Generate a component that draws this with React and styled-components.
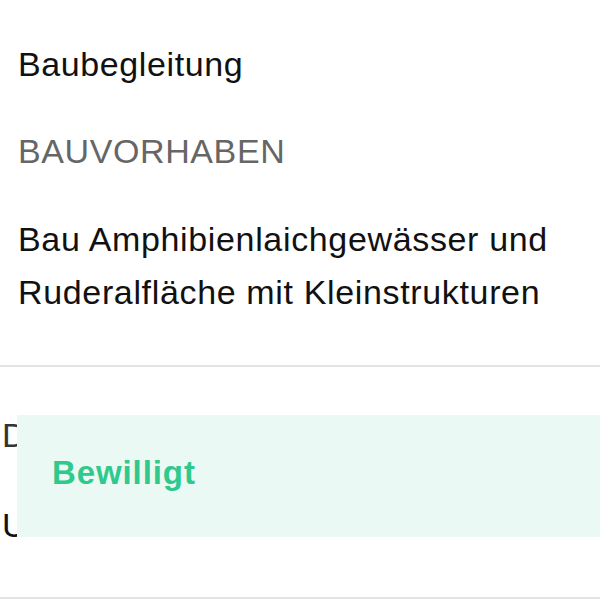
import React from 'react';
import styled, { createGlobalStyle } from 'styled-components';

const GlobalStyle = createGlobalStyle`
  html, body {
    margin: 0;
    padding: 0;
    background: #fff;
  }
  body {
    font-family: "Liberation Sans", Arial, sans-serif;
  }
`

const Page = styled.div`
  width: 600px;
  padding-top: 44px;
`

const Section = styled.div`
  display: flex;
  flex-direction: column;
  padding-left: 18px;
  padding-bottom: 46px;
`

const Title = styled.div`
  font-size: 34px;
  line-height: 40px;
  letter-spacing: 0.6px;
  color: #111;
`

const Label = styled.div`
  font-size: 34px;
  line-height: 40px;
  letter-spacing: 0.6px;
  color: ${p => p.$dark ? '#333' : '#666'};
  margin-top: ${p => p.$top || 0}px;
`

const Value = styled.div`
  font-size: 34px;
  line-height: ${p => p.$lh || 53}px;
  letter-spacing: 0.65px;
  color: #111;
  margin-top: ${p => p.$top || 0}px;
`

const Divider = styled.hr`
  margin: 0;
  border: none;
  height: 2px;
  background: #e4e4e4;
`

const StatusSection = styled.div`
  position: relative;
  display: flex;
  flex-direction: column;
  padding-top: 48px;
  padding-bottom: 52px;
  padding-left: 2px;
  overflow: hidden;
`

const Toast = styled.div`
  position: absolute;
  top: 48px;
  left: 17px;
  right: 0;
  height: 122px;
  box-sizing: border-box;
  display: flex;
  align-items: center;
  padding-left: 35px;
  padding-bottom: 6px;
  background: #ebf9f4;
`

const ToastText = styled.span`
  font-size: 33px;
  font-weight: 700;
  letter-spacing: 0.9px;
  color: #2fc98d;
`

export default function App() {
  return (
    <>
      <GlobalStyle />
      <Page>
        <Section>
          <Title>Baubegleitung</Title>
          <Label $top={47}>BAUVORHABEN</Label>
          <Value $top={42}>
            Bau Amphibienlaichgewässer und<br />
            Ruderalfläche mit Kleinstrukturen
          </Value>
        </Section>
        <Divider />
        <StatusSection>
          <Label $dark>DATUM</Label>
          <Value $top={50} $lh={40}>Unbekannt</Value>
          <Toast>
            <ToastText>Bewilligt</ToastText>
          </Toast>
        </StatusSection>
        <Divider />
      </Page>
    </>
  );
}
